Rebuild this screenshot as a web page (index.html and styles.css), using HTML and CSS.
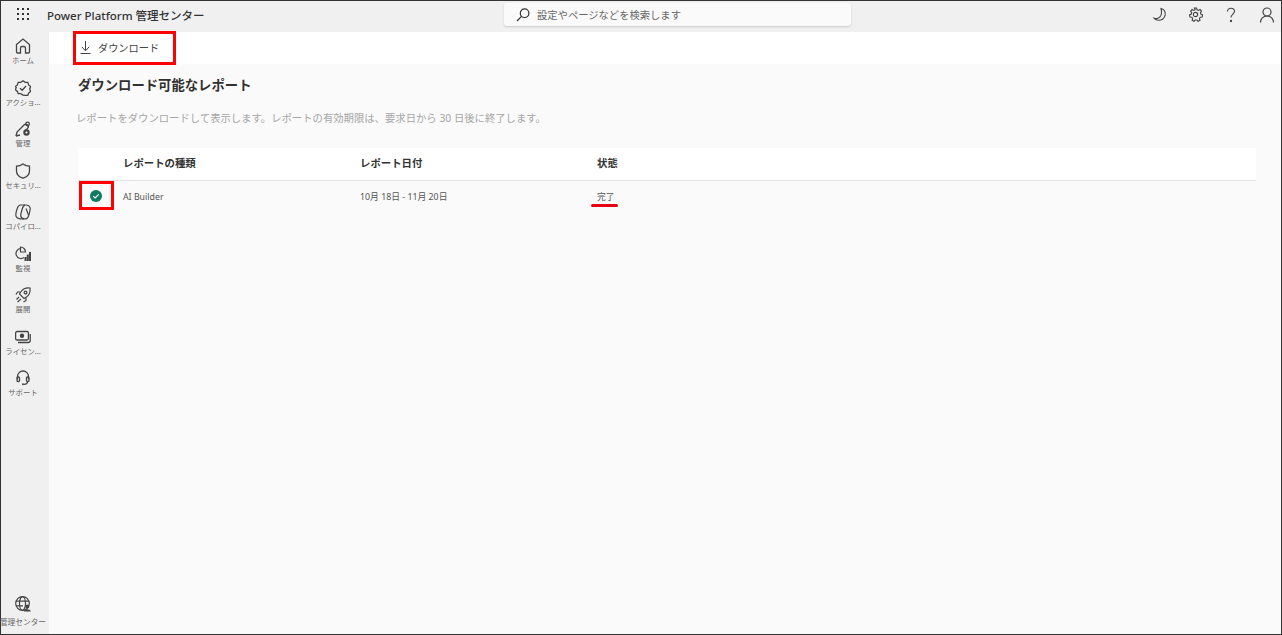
FILE: index.html
```html
<!DOCTYPE html>
<html lang="ja">
<head>
    <meta charset="utf-8">
    <title>Power Platform 管理センター</title>
    <link rel="stylesheet" href="styles.css">
</head>
<body>
<div class="frame">
    <header class="topbar">
        <div class="brand">
            <svg class="waffle" width="13" height="13" viewBox="0 0 13 13" fill="#333">
                <rect x="0" y="0" width="2" height="2"/><rect x="5" y="0" width="2" height="2"/><rect x="10" y="0" width="2" height="2"/>
                <rect x="0" y="5" width="2" height="2"/><rect x="5" y="5" width="2" height="2"/><rect x="10" y="5" width="2" height="2"/>
                <rect x="0" y="10" width="2" height="2"/><rect x="5" y="10" width="2" height="2"/><rect x="10" y="10" width="2" height="2"/>
            </svg>
            <span class="brand-name">Power Platform 管理センター</span>
        </div>
        <div class="search">
            <svg width="14" height="14" viewBox="0 0 14 14" fill="none" stroke="#333" stroke-width="1.2"><circle cx="8.6" cy="5.2" r="4.3"/><path d="M5.5 8.300 1 13"/></svg>
            <span>設定やページなどを検索します</span>
        </div>
        <div class="tools">
            <svg width="16" height="16" viewBox="0 0 16 16" fill="none" stroke="#444" stroke-width="1.1"><path d="M9 1.500c3 .8 4.600 3.400 4.200 6.400-.5 3.400-3.600 5.600-6.800 5.400-1.800-.1-3.200-.9-4.200-2 2.600.7 4.700.1 6-1.600C9.600 7.700 9.800 4.400 9 1.500z"/></svg>
            <svg width="15" height="15" viewBox="0 0 16 16" fill="none" stroke="#444" stroke-width="1.2"><circle cx="8" cy="8" r="2.300"/><path d="M6.800 1h2.400l.4 2 1.500.7 1.800-1 1.500 1.800-1.200 1.600.5 1.500 1.800.8-.4 2.300-2 .2-.9 1.400.6 1.900-2 1.100-1.400-1.400h-1.700l-1.300 1.400-2-1.100.6-1.900-.9-1.400-2-.2-.4-2.300 1.800-.8.500-1.500-1.200-1.600 1.500-1.800 1.800 1 1.500-.7z"/></svg>
            <svg width="16" height="16" viewBox="0 0 16 16" fill="none" stroke="#444" stroke-width="1.1"><path d="M4.500 4.500C4.500 2.500 6 1.200 8 1.200s3.500 1.300 3.500 3.100c0 2.700-3.500 2.900-3.500 6.200"/><circle cx="8" cy="14" r=".6" fill="#444"/></svg>
            <svg width="16" height="16" viewBox="0 0 16 16" fill="none" stroke="#444" stroke-width="1.2"><circle cx="8" cy="5" r="4"/><path d="M1.500 15.500c0-3.500 2.500-6.500 6.500-6.500s6.500 3 6.500 6.500"/></svg>
        </div>
    </header>
    <div class="main">
        <nav class="sidebar">
            <a class="nav-item">
                <svg width="16" height="16" viewBox="0 0 16 16" fill="none" stroke="#444" stroke-width="1.3"><path d="M1.500 6.500 8 1l6.500 5.500V14a1 1 0 0 1-1 1H10.500V10a1.500 1.500 0 0 0-1.500-1.500H7A1.500 1.500 0 0 0 5.500 10v5h-3a1 1 0 0 1-1-1z"/></svg>
                <span>ホーム</span>
            </a>
            <a class="nav-item">
                <svg width="16" height="16" viewBox="0 0 16 16" fill="none" stroke="#444" stroke-width="1.3"><path d="M8 .8l2.200 1.500 2.600.1.800 2.500 2 1.700-.9 2.400.9 2.400-2 1.700-.8 2.200-2.600.1L8 15.200l-2.200-1.500-2.600-.1-.8-2.200-2-1.700.9-2.400L.4 6.600l2-1.700.8-2.500 2.600-.1z"/><path d="M5 8.200l2.200 2.100L11 6"/></svg>
                <span>アクショ...</span>
            </a>
            <a class="nav-item">
                <svg width="16" height="16" viewBox="0 0 16 16" fill="none" stroke="#444" stroke-width="1.3"><path d="M1 15l1-4 7-7a2.500 2.500 0 0 1 3.500 0c1 1 1 2.500 0 3.500L9 10.500"/><circle cx="12.500" cy="3" r="1.800"/><path d="M1 15l4-1"/><circle cx="11.500" cy="11.500" r="3.200" fill="#444" stroke="none"/><circle cx="11.500" cy="11.500" r="1.100" fill="#f0f0f0" stroke="none"/></svg>
                <span>管理</span>
            </a>
            <a class="nav-item">
                <svg width="16" height="16" viewBox="0 0 16 16" fill="none" stroke="#444" stroke-width="1.3"><path d="M8 1c2 1.500 4 2.200 6.500 2.200V8c0 3.500-2.500 5.800-6.500 7.200C4 13.800 1.500 11.500 1.500 8V3.200C4 3.200 6 2.500 8 1z"/></svg>
                <span>セキュリ...</span>
            </a>
            <a class="nav-item">
                <svg width="16" height="16" viewBox="0 0 16 16" fill="none" stroke="#444" stroke-width="1.2"><path d="M5.500 1h5.500c1.500 0 4.200 1 4.200 3.500 0 1.500-.5 4-1.300 6.500-.6 2-1.700 3.800-3.400 3.800H5c-2 0-4.200-1.300-4.200-3.800 0-1.500.7-4.500 1.500-6.700C3 2.300 3.800 1 5.500 1z"/><path d="M10 1.200c-1.500.3-2.200 1.800-2.800 3.800-.6 2-1.500 5-1.500 6.500 0 1.800 1.500 3 3.300 3.300M11 4.500l2.500 6.500"/></svg>
                <span>コパイロ...</span>
            </a>
            <a class="nav-item">
                <svg width="16" height="16" viewBox="0 0 16 16" fill="none" stroke="#444" stroke-width="1.2"><path d="M6 2.500a5 5 0 1 0 3 9"/><path d="M5.500 1a5 5 0 0 1 5 5h-5z"/><path d="M10.500 15V11M12.800 15V8.500M15 15V6" stroke-width="2"/></svg>
                <span>監視</span>
            </a>
            <a class="nav-item">
                <svg width="16" height="16" viewBox="0 0 16 16" fill="none" stroke="#444" stroke-width="1.2"><path d="M15 1c-4-.5-7 .8-9 3.500L4.500 7l4.500 4.500 2.500-1.500C14.200 8 15.500 5 15 1z"/><circle cx="10.500" cy="5.500" r="1.400"/><path d="M5 5H2.500L1 7.500M11 11v2.500L8.500 15M4 10l-2.500 2.500M6 12l-3.500 3"/></svg>
                <span>展開</span>
            </a>
            <a class="nav-item">
                <svg width="16" height="16" viewBox="0 0 16 16" fill="none" stroke="#444" stroke-width="1.3"><rect x=".6" y="2.500" width="12.800" height="8.500" rx="1.500"/><circle cx="7" cy="6.700" r="2.200" fill="#444" stroke="none"/><path d="M15.200 5v6.500a2 2 0 0 1-2 2H3"/></svg>
                <span>ライセン...</span>
            </a>
            <a class="nav-item">
                <svg width="16" height="16" viewBox="0 0 16 16" fill="none" stroke="#444" stroke-width="1.3"><path d="M2.500 9V6.500a5.500 5.500 0 0 1 11 0V9"/><rect x="2" y="7" width="2.500" height="4.500" rx="1"/><rect x="11.500" y="7" width="2.500" height="4.500" rx="1"/><path d="M12.500 11.500c0 1.800-1.500 2.800-3.500 2.800"/><circle cx="8" cy="14.300" r="1" fill="#444" stroke="none"/></svg>
                <span>サポート</span>
            </a>
            <a class="nav-item nav-bottom">
                <svg width="16" height="16" viewBox="0 0 16 16" fill="none" stroke="#444" stroke-width="1.2"><circle cx="7.500" cy="7.500" r="6.800"/><ellipse cx="7.500" cy="7.500" rx="3" ry="6.800"/><path d="M1 5.200h13M1 9.800h7"/><circle cx="12.300" cy="10.500" r="2" fill="#444" stroke="none"/><path d="M8.800 15.500c.3-1.500 1.700-2.300 3.500-2.300s3.200.8 3.500 2.300z" fill="#444" stroke="none"/></svg>
                <span>管理センター</span>
            </a>
        </nav>
        <div class="content">
            <div class="commandbar">
                <button class="cmd">
                    <svg width="11" height="13" viewBox="0 0 11 13" fill="none" stroke="#444" stroke-width="1"><path d="M5.500 0v9.500M1.800 5.800l3.700 4 3.700-4M.5 12.500h10"/></svg>
                    <span>ダウンロード</span>
                </button>
            </div>
            <div class="page">
                <h1>ダウンロード可能なレポート</h1>
                <p class="desc">レポートをダウンロードして表示します。レポートの有効期限は、要求日から 30 日後に終了します。</p>
                <div class="table">
                    <div class="row head">
                        <div class="cell-check"></div>
                        <div class="cell-type">レポートの種類</div>
                        <div class="cell-date">レポート日付</div>
                        <div class="cell-state">状態</div>
                    </div>
                    <div class="row item">
                        <div class="cell-check">
                            <svg width="12" height="12" viewBox="0 0 12 12"><circle cx="6" cy="6" r="6" fill="#0f7b63"/><path d="M3.300 6.200l1.900 1.700 3.500-3.500" fill="none" stroke="#fff" stroke-width="1.200"/></svg>
                        </div>
                        <div class="cell-type">AI Builder</div>
                        <div class="cell-date">10月 18日 - 11月 20日</div>
                        <div class="cell-state">完了</div>
                    </div>
                </div>
            </div>
        </div>
    </div>
    <!-- 赤い注釈 -->
    <div class="mark mark-download"></div>
    <div class="mark mark-check"></div>
    <div class="mark-line"></div>
</div>
</body>
</html>
```

FILE: styles.css
```css
* {
    margin: 0;
    padding: 0;
    box-sizing: border-box;
}
html, body {
    height: 100%;
    overflow: hidden;
}
body {
    font-family: "Noto Sans", "Noto Sans CJK JP", sans-serif;
    color: #323130;
}
.frame {
    position: relative;
    height: 635px;
    border: 1px solid #333;
    display: flex;
    flex-direction: column;
    background: #f0f0f0;
}
.topbar {
    height: 31px;
    flex: none;
    display: flex;
    align-items: center;
    position: relative;
    padding-bottom: 4px;
}
.brand {
    display: flex;
    align-items: center;
    padding-left: 16px;
}
.brand-name {
    margin-left: 17px;
    font-size: 11.5px;
    font-weight: 500;
    color: #333;
    white-space: nowrap;
}
.search {
    position: absolute;
    left: 503px;
    top: 2px;
    width: 347px;
    height: 23px;
    background: #fafafa;
    border-radius: 3px;
    box-shadow: 0 1px 2px rgba(0,0,0,.16);
    display: flex;
    align-items: center;
    padding-left: 12px;
    gap: 7px;
    font-size: 10.3px;
    color: #666;
}
.tools {
    margin-left: auto;
    display: flex;
    align-items: center;
    gap: 20px;
    padding-right: 6px;
}
.main {
    flex: 1;
    display: flex;
    min-height: 0;
}
.sidebar {
    width: 48px;
    flex: none;
    display: flex;
    flex-direction: column;
    align-items: center;
    padding: 6px 4px 0 0;
}
.nav-item {
    height: 41.5px;
    width: 48px;
    flex: none;
    display: flex;
    flex-direction: column;
    align-items: center;
    font-size: 7.4px;
    line-height: 10px;
    color: #666;
    white-space: nowrap;
}
.nav-item svg {
    flex: none;
    margin-bottom: 1px;
}
.nav-bottom {
    margin-top: auto;
    height: 38px;
}
.nav-bottom svg {
    margin-bottom: 5px;
}
.nav-bottom span {
    font-size: 7.7px;
}
.content {
    flex: 1;
    display: flex;
    flex-direction: column;
    background: #fafafa;
}
.commandbar {
    height: 32px;
    flex: none;
    background: #fff;
    display: flex;
    align-items: center;
    padding-left: 31px;
}
.cmd {
    display: flex;
    align-items: center;
    gap: 7px;
    border: 0;
    background: none;
    font: inherit;
    font-size: 10.2px;
    color: #444;
    margin-top: -2px;
}
.page {
    padding: 11px 25px 0 29px;
}
h1 {
    font-size: 13.35px;
    line-height: 20px;
    font-weight: 700;
    color: #323130;
}
.desc {
    margin-top: 15px;
    font-size: 10.35px;
    line-height: 16px;
    color: #a6a6a6;
    white-space: nowrap;
    margin-left: -2px;
}
.table {
    margin-top: 22px;
}
.row {
    display: flex;
    align-items: center;
    font-size: 8.8px;
}
.head {
    height: 33px;
    background: #fff;
    border-bottom: 1px solid #e3e3e3;
    font-size: 10.4px;
    font-weight: 700;
    color: #333;
    padding-bottom: 4px;
}
.item {
    height: 31px;
    color: #555;
}
.cell-check {
    width: 45px;
    display: flex;
    padding-left: 12px;
    margin-top: -2px;
}
.cell-type {
    width: 237px;
}
.cell-date {
    width: 237px;
}
.mark {
    position: absolute;
    border: 3px solid #f00;
}
.mark-download {
    left: 72px;
    top: 30px;
    width: 103px;
    height: 34px;
}
.mark-check {
    left: 78px;
    top: 180px;
    width: 35px;
    height: 29px;
}
.mark-line {
    position: absolute;
    left: 590px;
    top: 203px;
    width: 27px;
    height: 3px;
    border-radius: 2px;
    background: #e60012;
}
```
